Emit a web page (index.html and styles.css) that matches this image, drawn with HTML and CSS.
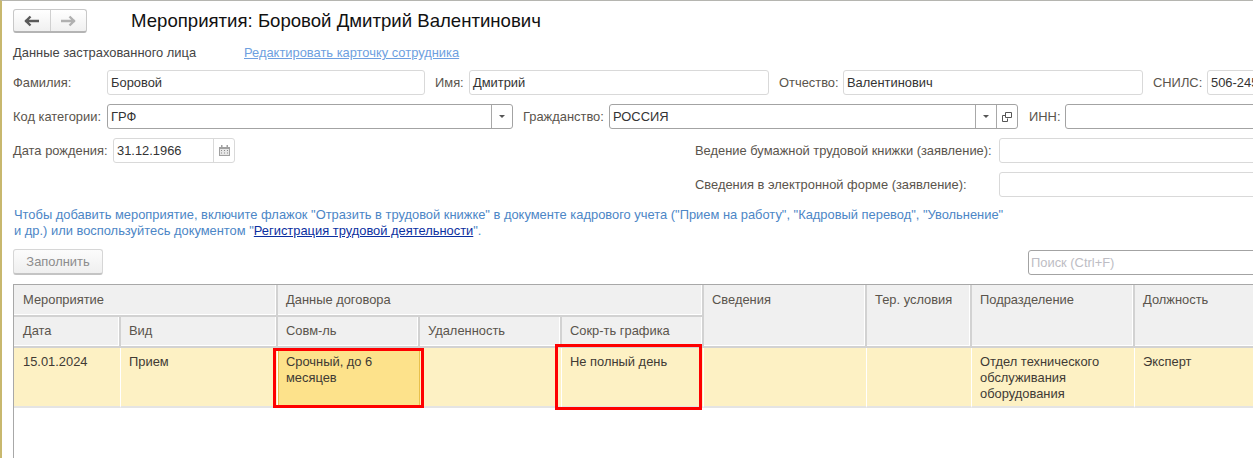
FILE: index.html
```html
<!DOCTYPE html>
<html lang="ru">
<head>
<meta charset="utf-8">
<title>Мероприятия</title>
<link rel="stylesheet" href="styles.css">
</head>
<body>
<div class="page">
  <header class="head">
    <div class="nav">
      <span class="nav-btn"><svg width="16" height="12" viewBox="0 0 16 12"><path d="M1 6h14M6.500 1.500 2 6l4.500 4.500" fill="none" stroke="#5a5a5a" stroke-width="2.400"/></svg></span>
      <span class="nav-btn"><svg width="16" height="12" viewBox="0 0 16 12"><path d="M1 6h14M9.500 1.500 14 6l-4.500 4.500" fill="none" stroke="#b0b0b0" stroke-width="2.400"/></svg></span>
    </div>
    <h1 class="title">Мероприятия: Боровой Дмитрий Валентинович</h1>
  </header>
  <div class="sub">
    <span class="sub-label">Данные застрахованного лица</span>
    <a class="edit-link" href="#">Редактировать карточку сотрудника</a>
  </div>

  <div class="row first">
    <label class="lbl w94">Фамилия:</label>
    <div class="field w318"><span class="val">Боровой</span></div>
    <label class="lbl w34 ml10">Имя:</label>
    <div class="field w300"><span class="val">Дмитрий</span></div>
    <label class="lbl w64 ml10">Отчество:</label>
    <div class="field w300"><span class="val">Валентинович</span></div>
    <label class="lbl w54 ml10">СНИЛС:</label>
    <div class="field w100"><span class="val">506-245-112 00</span></div>
  </div>

  <div class="row">
    <label class="lbl w94">Код категории:</label>
    <div class="field strong w406">
      <span class="val">ГРФ</span>
      <span class="fbtn"><i class="tri"></i></span>
    </div>
    <label class="lbl w86 ml10">Гражданство:</label>
    <div class="field strong w409">
      <span class="val">РОССИЯ</span>
      <span class="fbtn"><i class="tri"></i></span>
      <span class="fbtn"><svg width="10" height="10" viewBox="0 0 10 10"><path d="M3.500 .5h6v5h-6zM3.500 3.500H.5v6h5V6.500" fill="none" stroke="#555"/></svg></span>
    </div>
    <label class="lbl w36 ml11">ИНН:</label>
    <div class="field strong w300"></div>
  </div>

  <div class="row split">
    <div class="date-group">
      <label class="lbl w100">Дата рождения:</label>
      <div class="field w122">
        <span class="val">31.12.1966</span>
        <span class="fbtn wide"><svg width="11" height="11" viewBox="0 0 11 11"><path d="M0 2h11v9H0z" fill="#a0a0a0"/><path d="M2 0h1.500v2H2zM7.500 0H9v2H7.500z" fill="#a0a0a0"/><path d="M1 4h9v6H1z" fill="#e6e6e6"/><path d="M2 5h1v1H2zM5 5h1v1H5zM8 5h1v1H8zM2 7.500h1v1H2zM5 7.500h1v1H5zM8 7.500h1v1H8z" fill="#8c8c8c"/></svg></span>
      </div>
    </div>
    <label class="lbl">Ведение бумажной трудовой книжки (заявление):</label>
    <div class="field w300"></div>
  </div>

  <div class="row split">
    <div></div>
    <label class="lbl">Сведения в электронной форме (заявление):</label>
    <div class="field w300"></div>
  </div>

  <p class="hint">Чтобы добавить мероприятие, включите флажок "Отразить в трудовой книжке" в документе кадрового учета ("Прием на работу", "Кадровый перевод", "Увольнение"<br>и др.) или воспользуйтесь документом "<a class="doc-link" href="#">Регистрация трудовой деятельности</a>".</p>

  <div class="tools">
    <button class="fill-btn" type="button">Заполнить</button>
    <div class="field strong search"><span class="val placeholder">Поиск (Ctrl+F)</span></div>
  </div>

  <div class="table">
    <div class="th top first-col c-span2">Мероприятие</div>
    <div class="th top c-span3">Данные договора</div>
    <div class="th top r-span2">Сведения</div>
    <div class="th top r-span2">Тер. условия</div>
    <div class="th top r-span2">Подразделение</div>
    <div class="th top r-span2">Должность</div>
    <div class="th first-col">Дата</div>
    <div class="th">Вид</div>
    <div class="th">Совм-ль</div>
    <div class="th">Удаленность</div>
    <div class="th">Сокр-ть графика</div>

    <div class="td first-col">15.01.2024</div>
    <div class="td">Прием</div>
    <div class="td active">Срочный, до 6 месяцев</div>
    <div class="td"></div>
    <div class="td">Не полный день</div>
    <div class="td"></div>
    <div class="td"></div>
    <div class="td">Отдел технического обслуживания оборудования</div>
    <div class="td">Эксперт</div>
    <span class="mark mark-a"></span>
    <span class="mark mark-b"></span>
  </div>
</div>
</body>
</html>
```

FILE: styles.css
```css
* { box-sizing: border-box; }
html, body { margin: 0; height: 100%; overflow: hidden; background: #fff; }
body { font: 12.9px/16px "Liberation Sans", Arial, sans-serif; color: #4a4540; }

.page {
  width: 1253px;
  height: 458px;
  overflow: hidden;
  border-top: 1px solid #b5b5b0;
  border-left: 2px solid #c8b86e;
  padding: 8px 0 0 11px;
}

.head { display: flex; align-items: center; height: 24px; }
.nav {
  display: flex;
  flex: none;
  width: 74px;
  height: 24px;
  border: 1px solid #c8c8c8;
  border-bottom: 2px solid #b4b4b4;
  border-radius: 3px;
  background: linear-gradient(#fff, #f0f0f0);
}
.nav-btn { flex: 1; display: flex; align-items: center; justify-content: center; }
.nav-btn + .nav-btn { border-left: 1px solid #d0d0d0; }
.title { margin: 0 0 0 44px; font-size: 18.6px; font-weight: 400; line-height: 24px; color: #111; white-space: nowrap; }

.sub { display: flex; height: 16px; margin-top: 12px; white-space: nowrap; }
.sub-label { width: 231px; color: #444; }
.edit-link { color: #6e9fe0; }

.row { display: flex; align-items: center; height: 25px; margin-top: 9px; white-space: nowrap; }
.row.split { display: grid; grid-template-columns: 682px 304px 300px; }
.date-group { display: flex; align-items: center; }

.lbl { flex: none; color: #5a544c; }
.field {
  flex: none;
  display: flex;
  align-items: center;
  height: 25px;
  border: 1px solid #d9d9d9;
  border-radius: 3px;
  background: #fff;
  overflow: hidden;
  color: #333;
}
.field.strong { border-color: #a3a3a3; }
.val { flex: 1; min-width: 0; padding-left: 3px; overflow: hidden; }
.fbtn { flex: none; display: flex; align-items: center; justify-content: center; width: 21px; height: 100%; border-left: 1px solid #a8a8a8; }
.fbtn.wide { border-left-color: #d9d9d9; }
.tri { width: 0; height: 0; border: 3px solid transparent; border-top: 3px solid #555; border-bottom: 0; }

.w34 { width: 34px; } .w36 { width: 36px; } .w54 { width: 54px; } .w64 { width: 64px; }
.w86 { width: 86px; } .w94 { width: 94px; } .w100 { width: 100px; } .w122 { width: 122px; }
.w318 { width: 318px; } .w300 { width: 300px; } .w406 { width: 406px; } .w409 { width: 409px; }
.ml10 { margin-left: 10px; } .ml11 { margin-left: 11px; }

.hint { margin: 10px 0 0 1px; color: #4c86c6; white-space: nowrap; }
.doc-link { color: #0b2fa0; }

.tools { display: flex; align-items: flex-start; margin-top: 10px; height: 26px; }
.fill-btn {
  flex: none;
  width: 90px;
  height: 26px;
  padding: 0;
  font: inherit;
  color: #8c8c8c;
  border: 1px solid #d6d6d6;
  border-bottom: 2px solid #c4c4c4;
  border-radius: 3px;
  background: linear-gradient(#fcfcfc, #efefef);
}
.search { width: 300px; margin: 1px 0 0 925px; }
.placeholder { color: #bdbdc4; padding-left: 2px; }

.table {
  position: relative;
  display: grid;
  grid-template-columns: 107px 157px 142px 142px 142px 163px 105px 163px 200px;
  grid-template-rows: 32px 31px 60px 1fr;
  width: 1322px;
  height: 180px;
  margin-top: 9px;
  border-top: 1px solid #a8a8a8;
  border-left: 1px solid #a8a8a8;
}
.th {
  padding: 6px 8px;
  background: #f0f0f0;
  border-right: 2px solid #d2d2d2;
  border-bottom: 2px solid #d2d2d2;
  box-shadow: inset -1px -1px 0 #fff;
  white-space: nowrap;
  color: #5a544c;
}
.th.top { padding-top: 7px; }
.first-col { padding-left: 9px; }
.c-span2 { grid-column: span 2; }
.c-span3 { grid-column: span 3; }
.r-span2 { grid-row: span 2; }
.td {
  padding: 6px 8px;
  background: #fdf1c4;
  border-right: 1px solid #fff;
  border-bottom: 2px solid #e4e4e4;
  color: #403a34;
}
.td.first-col { padding-left: 9px; }
.th.first-col { padding-left: 9px; }
.active { background: #fde28b; border: 1px solid #e8c04a; border-bottom: 2px solid #e8c04a; padding: 5px 7px; }

.mark { position: absolute; border: 3px solid #fe0000; pointer-events: none; }
.mark-a { left: 259px; top: 63px; width: 151px; height: 60px; }
.mark-b { left: 541px; top: 59px; width: 147px; height: 66px; }
```
